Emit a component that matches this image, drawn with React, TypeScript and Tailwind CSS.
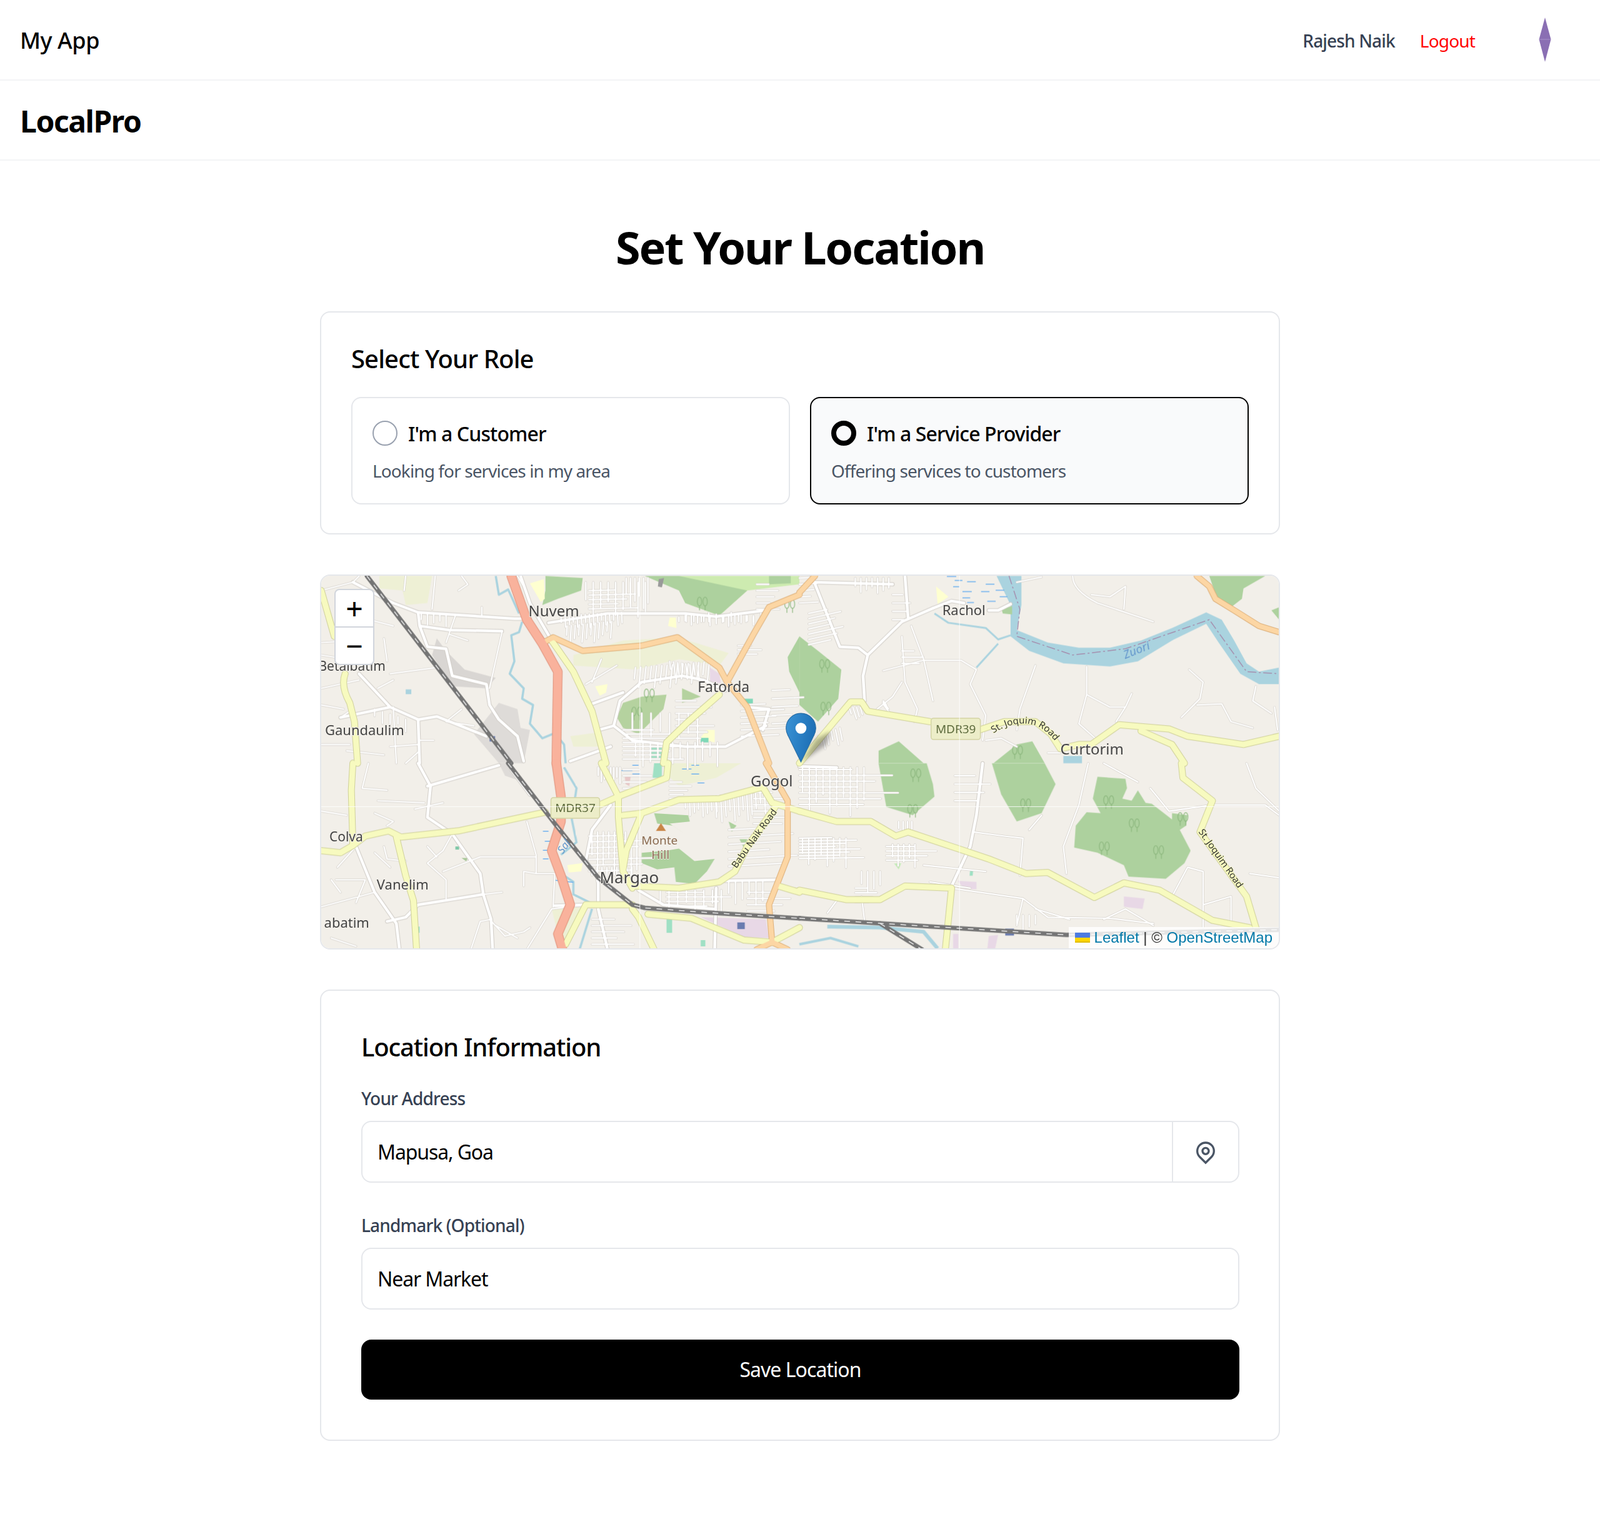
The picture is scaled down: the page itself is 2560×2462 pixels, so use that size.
import { RiMapPinLine } from 'react-icons/ri';

// map art is traced from the four map quadrants, each one in its own crop coordinates
const comb = (x: number, y: number, n: number, dx: number, dy: number, lx: number, ly: number) => {
  let d = '';
  for (let i = 0; i < n; i++) {
    const k = 0.65 + ((i * 37) % 10) / 14;
    d += `M${x + i * dx},${y + i * dy} l${Math.round(lx * k)},${Math.round(ly * k)} `;
  }
  return d;
};

interface Quad {
  tx: number;
  ty: number;
  areas: [string, string][];
  water: [number, string][];
  thin: string[];
  white: string[];
  yellow: string[];
  orange: string[];
  trunk: string[];
  rail: string[];
}

const quads: Quad[] = [
  {
    tx: -14,
    ty: -19,
    areas: [
      ['#eef0d5', 'M840,440 L1000,370 L1175,355 L1340,430 L1310,490 L1180,460 L1040,510 L840,490 Z'],
      ['#eef0d5', 'M830,830 L930,810 L920,880 L840,880 Z'],
      ['#eef0d5', 'M215,60 L385,60 L370,190 L300,200 L290,130 L215,120 Z'],
      ['#d9d6d3', 'M400,360 L430,420 L490,510 L590,550 L560,600 L450,590 L385,440 Z'],
      ['#dedbd8', 'M600,670 L660,700 L670,790 L700,800 L680,960 L600,960 L520,820 Z'],
      ['#cdebb0', 'M1180,60 L1568,60 L1568,100 L1400,130 L1310,250 L1200,190 Z'],
      ['#add19e', 'M1070,60 L1180,60 L1400,130 L1310,250 L1200,190 L1180,130 Z'],
      ['#add19e', 'M1470,60 L1540,60 L1540,95 L1470,100 Z'],
      ['#add19e', 'M750,60 L870,70 L865,130 L790,170 L740,200 L750,130 Z'],
      ['#feffd0', 'M700,95 L745,75 L748,170 L735,185 Z'],
      ['#feffd0', 'M910,590 L950,580 L945,620 L925,635 Z'],
      ['#feffd0', 'M1150,260 L1170,260 L1172,310 L1145,300 Z'],
      ['#feffd0', 'M1270,800 L1295,800 L1295,860 L1245,845 Z'],
      ['#b5d29f', 'M980,740 L1000,670 L1060,640 L1140,630 L1130,700 L1050,820 L1000,790 Z'],
      ['#b5d29f', 'M1190,600 L1250,640 L1190,670 Z'],
      ['#add19e', 'M1530,450 L1568,350 L1568,620 L1535,520 Z'],
      ['#e8d8e6', 'M1280,500 L1310,530 L1315,575 L1280,570 Z'],
      ['#7fd8b8', 'M1390,650 L1418,650 L1418,695 L1390,695 Z'],
      ['#7fd8b8', 'M1250,838 L1275,838 L1275,860 L1250,860 Z'],
      ['#9fe0c4', 'M1090,880 L1125,880 L1125,945 L1090,945 Z'],
      ['#aad3df', 'M300,605 L318,605 L318,628 L300,628 Z'],
      ['#6a7cb0', 'M570,830 L588,830 L588,855 L570,855 Z'],
      ['#9a9a9a', 'M1115,75 L1132,70 L1125,115 L1112,110 Z'],
    ],
    water: [
      [
        3.5,
        'M590,60 L600,150 L630,125 L665,240 M675,280 L665,330 L640,345 L650,470 L635,530 L680,600 L675,650 L710,680 L700,770 L740,840 L780,815 L810,870 L815,960',
      ],
    ],
    thin: [
      'M300,60 L295,130 M395,60 L385,220 M545,210 L545,250 M460,250 L430,380 M610,330 L570,600 M930,460 L900,570 M880,580 L980,490',
      'M150,60 L130,90 L28,130 M28,440 L150,470 M230,360 L240,470 M28,600 L150,560 M90,740 L130,700 M210,600 L260,560 M260,690 L270,960',
      'M340,850 L390,850 M345,900 L300,960 M28,870 L120,870 M250,880 L340,870 M400,500 L250,530 M28,380 L150,370 M28,680 L100,700 M110,900 L230,920',
      'M660,60 L680,110 M480,60 L500,100 L470,130 M130,250 L260,300 M480,700 L430,760 L520,780 M440,340 L500,370',
      comb(880, 90, 9, 24, 0, 0, 130),
      comb(890, 130, 5, 0, 22, 130, -4),
      comb(1010, 70, 6, 14, 0, 0, 120),
      comb(1040, 500, 15, 17, -2, -6, 85),
      comb(1150, 470, 8, 13, 3, 4, 60),
      comb(820, 300, 12, 13, -2, -3, 70),
      comb(800, 250, 16, 13, -1, 2, 50),
      comb(1180, 280, 12, 24, 0, 0, -35),
      comb(1200, 250, 12, 20, 0, 0, 40),
      comb(1380, 680, 6, 0, 30, 120, -8),
      comb(1030, 720, 8, 30, 0, 0, 120),
      comb(1040, 860, 12, 24, 0, 0, 100),
      comb(1000, 800, 8, 0, 20, 150, 0),
      comb(1170, 660, 7, 0, 30, 100, 0),
      comb(1480, 610, 5, 0, 40, 88, -6),
      comb(1430, 100, 5, 0, 30, 60, 0),
      comb(1370, 395, 3, 0, 20, 65, 0),
      comb(200, 700, 5, 25, 12, 0, 50),
      comb(350, 240, 5, 20, 2, 0, 45),
    ],
    white: [
      'M260,190 L340,235 L650,265 L700,265 M760,285 L950,240 L1200,240 L1300,255 L1460,225',
      'M670,60 L700,190 L770,370',
      'M340,235 L345,300 L440,320 L610,325 M345,300 L370,400 L430,410 L450,540 L560,580 L570,680 L600,750 L660,830 L680,950',
      'M130,90 L260,190 M150,530 L250,690 L340,750 L400,735 L560,830 M340,750 L345,960 M250,690 L90,740',
      'M970,780 L990,660 L1060,570 L1190,540 L1260,560 L1330,610 M970,780 L1030,850 L1200,880 L1330,880 L1460,780 M830,950 L960,880',
      'M890,680 L1000,620 M920,800 L970,780 M1400,690 L1470,700 L1450,800',
    ],
    yellow: [
      'M28,130 L70,350 M105,530 Q90,590 120,670 L135,760 L145,960',
      'M770,370 L840,520 L900,710 L945,960',
      'M1310,630 L1210,760 L1140,860 L1130,960',
    ],
    orange: [
      'M750,375 L775,355 L870,420 L1060,395 L1175,355 L1310,500 L1335,570 L1400,690 L1470,960',
      'M1335,570 L1420,340 L1470,210 L1568,150',
    ],
    trunk: ['M640,60 L690,270 L740,385 L790,520 L785,960'],
    rail: ['M175,60 L640,960'],
  },
  {
    tx: -14,
    ty: 301,
    areas: [
      ['#eef0d5', 'M1140,0 L1380,0 L1300,70 L1180,110 L1145,60 Z'],
      ['#eef0d5', 'M770,700 L875,690 L815,850 L790,820 Z'],
      ['#e8d8e6', 'M1250,740 L1460,750 L1470,840 L1390,835 Z'],
      ['#6a7cb0', 'M1368,765 L1392,765 L1392,797 L1368,797 Z'],
      ['#dedbd8', 'M600,0 L630,0 L660,80 L620,60 Z'],
      ['#add19e', 'M1100,240 L1210,250 L1215,280 L1150,290 L1200,340 L1160,300 L1110,290 Z'],
      ['#add19e', 'M1060,430 L1140,420 L1180,410 L1230,470 L1295,460 L1270,520 L1230,580 L1170,570 L1165,500 L1110,510 L1060,480 Z'],
      ['#add19e', 'M1340,280 L1365,300 L1350,330 Z'],
      ['#add19e', 'M1375,365 L1400,365 L1390,410 Z'],
      ['#feffd0', 'M820,490 L870,480 L865,520 L825,525 Z'],
      ['#9fe0c4', 'M1100,0 L1125,0 L1125,70 L1095,70 Z'],
      ['#9fe0c4', 'M1140,745 L1158,745 L1158,815 L1140,815 Z'],
      ['#9fe0c4', 'M1250,850 L1265,850 L1265,880 L1250,880 Z'],
      ['#9fe0c4', 'M335,785 L345,785 L345,815 L335,815 Z'],
      ['#e8c8c8', 'M1005,60 L1025,60 L1020,110 L1008,100 Z'],
      ['#7fc8a8', 'M460,400 L472,400 L472,415 L460,415 Z'],
      ['#a9c89a', 'M480,455 L500,455 L495,472 Z'],
      ['#c98546', 'M1122,288 L1138,325 L1106,325 Z'],
    ],
    water: [
      [3.5, 'M810,20 L850,120 L835,270 L850,380 L800,440 M810,540 L840,570 L840,630 L900,675 M900,700 L860,895'],
      [
        1.5,
        'M995,35 L1030,35 M1030,10 L1050,10 M1030,52 L1055,52 M1190,28 L1220,28 M1220,52 L1245,52 M1240,95 L1262,95 M1220,10 L1245,10 M742,327 L760,327 M748,375 L770,375 M742,418 L765,418 M742,460 L760,460 M778,562 L840,572',
      ],
    ],
    thin: [
      'M180,0 L160,120 L240,130 M210,180 L360,190 M140,400 L80,500 M28,690 L200,620 M200,430 L250,500 M75,560 L170,560 L140,670',
      'M330,220 L420,190 M420,520 L540,450 L720,450 M450,340 L420,420 L370,480 L430,560 L430,650 M340,680 L550,630 L610,620 M570,750 L620,830 L680,810 L700,790',
      'M690,280 L720,440 L720,530 L680,520 L680,590 M720,530 L780,530 L775,690 M510,895 L540,760 L575,750 M690,895 L770,700 L880,680',
      'M28,230 L110,250 M200,240 L260,280 L240,300 M60,840 L140,880 M230,400 L240,460 L300,470 M370,400 L400,450 M590,780 L660,840 M60,560 L90,620',
      comb(900, 330, 9, 18, 0, 0, 170),
      comb(890, 350, 7, 0, 28, 170, -6),
      comb(900, 500, 9, 16, 0, 0, 60),
      comb(1120, 610, 8, 28, 0, 0, 80),
      comb(1140, 620, 4, 0, 22, 180, 0),
      comb(1300, 160, 12, 14, -4, 4, 110),
      comb(1200, 170, 8, 14, 0, 2, 70),
      comb(1340, 320, 6, 0, 35, 180, -15),
      comb(1420, 140, 6, 0, 30, 90, 0),
      comb(1340, 560, 6, 22, 0, 0, 100),
      comb(1400, 620, 4, 0, 30, 120, 0),
      comb(900, 750, 6, 0, 30, 110, 0),
      comb(1150, 90, 5, 0, 20, 60, 0),
      comb(1000, 30, 4, 0, 30, 80, 0),
      comb(920, 20, 8, 10, 0, 0, 60),
    ],
    white: [
      'M340,0 L380,110 L370,260 L450,340 L540,530 L550,630 L575,750 L580,895',
      'M370,110 L600,10 M140,400 L200,620 L270,770 L280,895 M550,630 L340,680 L300,740 L240,760',
      'M880,680 L780,685 M640,30 L700,150 M960,200 L900,320 L880,470 L920,550 L920,700 L950,895',
      'M1050,610 L1130,680 L1290,700 M1300,600 L1295,895 M1320,565 L1500,560',
    ],
    yellow: [
      'M28,420 L90,430 L130,395 L170,350 L245,325 L285,355 L470,325 L750,235',
      'M925,200 L985,160 L1140,70 L1145,0 M930,0 L985,160 M985,160 L985,260 L1000,520 L1030,600 M1060,240 L1010,420 L1000,510',
      'M1000,250 L1060,240 L1180,175 L1310,170 L1450,115 L1480,190 L1568,230',
      'M270,355 L300,540 L325,660 L335,895 M130,0 L125,130 L130,395',
      'M1030,590 L1180,600 L1310,570 L1360,520 L1400,400 L1490,210',
      'M815,870 L880,680 L1030,680 M1030,700 L1050,740 L1100,895 M1080,725 L1220,745 L1390,850 L1480,860 L1568,790 M1500,590 L1568,620',
    ],
    orange: ['M1460,0 L1530,180 L1530,450 L1470,680 L1480,860 M1430,895 L1480,860 L1530,895'],
    trunk: ['M785,0 L800,160 L800,280 L770,420 L800,540 L830,680 L790,820 L805,895'],
    rail: ['M630,0 L780,290 L920,550 L1030,680 L1070,695 L1250,715 L1568,745'],
  },
  {
    tx: 766,
    ty: -19,
    areas: [
      [
        '#aad3df',
        'M635,60 L715,60 L715,200 L700,320 L800,380 L900,405 L1000,405 L1100,370 L1200,310 L1310,235 L1360,270 L1400,370 L1440,480 L1480,520 L1545,500 L1545,580 L1480,580 L1420,530 L1350,380 L1310,290 L1200,370 L1090,470 L1000,495 L850,480 L740,420 L680,350 L680,200 Z',
      ],
      ['#add19e', 'M1320,60 L1500,60 L1430,120 L1425,170 L1390,210 L1345,170 Z'],
      ['#add19e', 'M1520,225 L1545,210 L1545,270 Z'],
      ['#add19e', 'M0,350 L60,420 L135,510 L125,650 L60,760 L0,680 Z'],
      ['#add19e', 'M255,900 L320,855 L400,960 L255,960 Z'],
      ['#add19e', 'M625,960 L700,870 L750,855 L790,960 Z'],
      ['#add19e', 'M650,215 L685,205 L685,245 L655,240 Z'],
      ['#feffd0', 'M440,110 L480,160 L445,195 Z'],
      ['#aad3df', 'M850,925 L910,925 L910,960 L850,960 Z'],
    ],
    water: [
      [3, 'M435,240 L480,285 L600,310 L640,365 L680,345 M640,385 L570,500'],
      [
        1.5,
        'M475,62 L505,62 M500,82 L525,82 M525,135 L555,135 M585,135 L612,135 M600,100 L628,100 M632,128 L660,128 M645,160 L670,160 M525,165 L550,165 M605,182 L632,182 M540,188 L562,188 M495,112 L515,112 M540,88 L568,88',
      ],
    ],
    thin: [
      'M880,60 Q880,130 960,190 L1140,280 M940,150 L1000,160 L1050,110 M1050,110 L1045,220 M700,90 L780,65',
      'M925,495 L925,630 L1000,690 L1050,690 M1070,625 L1050,690 L1020,760 M925,630 L900,770 L960,850 M760,490 L710,700 L700,800',
      'M1255,510 L1300,570 L1290,650 L1230,740 M1280,680 L1360,675 L1390,760 L1460,790 M1470,590 L1460,660 L1520,720 M1530,690 L1540,800',
      'M270,515 L400,465 L520,465 L570,510 L550,580 L600,730 L590,850 M360,300 L400,460 L430,660 M330,570 L300,640 L250,700 M330,350 L340,570 L380,700 L370,760',
      'M600,850 L650,840 L700,880 M800,910 L840,910',
      comb(30, 240, 7, 0, 25, 90, -30),
      comb(270, 660, 5, 0, 4, 15, 30),
      comb(180, 70, 7, 18, 0, 0, 60),
      comb(300, 150, 4, 0, 40, 50, 0),
      comb(160, 690, 4, 12, 0, 10, 50),
      comb(60, 830, 6, 14, -8, 8, 60),
      comb(0, 70, 5, 0, 30, 50, -4),
      comb(330, 420, 3, 0, 30, 60, 0),
    ],
    white: [
      'M430,215 L330,280 L220,440 L205,540 L210,660',
      'M430,215 L490,180 L530,190 M610,225 L640,225 L680,195',
      'M40,60 L130,400 L190,405 L220,440 M340,60 L350,260 M50,90 L300,100',
    ],
    yellow: [
      'M0,960 L95,790 L165,665 L200,665 L220,710 L420,760',
      'M580,800 L660,760 L760,760 L810,820 L840,890 L900,870 L940,870 L1030,775 L1190,795 L1250,830 L1430,870 L1545,830',
      'M1100,805 L1200,870 L1240,960',
    ],
    orange: ['M1280,60 L1320,110 L1340,170 L1400,225 L1480,300 L1545,330', 'M0,140 L50,60'],
    trunk: [],
    rail: [],
  },
  {
    tx: 766,
    ty: 301,
    areas: [
      ['#add19e', 'M255,0 L410,0 L430,100 L435,160 L365,250 L280,210 Z'],
      ['#add19e', 'M620,0 L790,0 L825,100 L780,240 L700,280 L650,150 Z'],
      [
        '#add19e',
        'M960,65 L1050,75 L1055,120 L1040,170 L1070,180 L1090,130 L1115,190 L1135,195 L1200,270 L1200,240 L1250,250 L1245,300 L1225,320 L1260,420 L1240,480 L1180,555 L1060,545 L1045,490 L960,430 L885,405 L890,300 L925,235 L970,240 L945,170 Z',
      ],
      ['#e8d8e6', 'M510,565 L570,570 L570,605 L530,605 Z'],
      ['#e8d8e6', 'M1045,640 L1112,650 L1105,700 L1045,690 Z'],
      ['#e8d8e6', 'M610,830 L640,825 L630,895 L605,895 Z'],
      ['#e8d8e6', 'M495,820 L512,820 L512,895 L495,895 Z'],
      ['#9fe0c4', 'M550,512 L560,512 L558,540 L548,540 Z'],
      ['#c4ecb8', 'M305,482 L328,480 L320,510 Z'],
      ['#6a7cb0', 'M663,795 L691,795 L691,828 L663,828 Z'],
    ],
    water: [
      [6, 'M90,785 L260,790 L400,810 L445,890'],
      [4, 'M0,870 L100,840 L190,880'],
    ],
    thin: [
      'M560,330 L660,350 L720,360 L710,540 M490,600 L720,650 L800,740 L1000,745 L1140,770 M720,650 L700,780',
      'M740,320 L780,250 M860,530 L850,400 L900,200 L930,0 M980,0 L1090,90 M1130,120 L1190,230 L1330,200 L1500,200 L1545,250',
      'M1200,640 L1250,500 L1300,520 L1300,790 M1300,680 L1390,640 L1390,770 M1450,530 L1545,550 M1440,0 L1470,120 L1545,230',
      'M90,720 L130,640 M200,640 L210,760 M980,750 L1050,700 L1140,780 M760,700 L870,750 M400,490 L600,520 M420,570 L550,600',
      comb(10, 20, 10, 22, 0, 0, 180),
      comb(0, 30, 7, 0, 28, 260, 0),
      comb(0, 360, 8, 0, 14, 160, -4),
      comb(10, 360, 8, 20, 0, 0, 110),
      comb(300, 390, 5, 18, 0, 0, 90),
      comb(280, 400, 4, 0, 22, 140, 0),
      comb(320, 280, 4, 14, 0, 0, 50),
      comb(200, 520, 4, 20, 0, 0, 90),
      comb(700, 730, 4, 20, 0, 0, 60),
      comb(500, 60, 4, 0, 40, 100, 0),
      comb(180, 600, 4, 0, 22, 60, 0),
    ],
    white: ['M590,0 L570,250 L550,400 L490,590', 'M0,15 L120,20'],
    yellow: [
      'M0,230 L120,280 L230,280 L310,350 L350,330 L610,460 L730,530 L800,525 L950,645 L1045,575 L1160,610 L1330,755 L1450,790',
      'M0,610 L150,655 L260,655 L340,590 L490,600 L470,895',
      'M1230,0 L1235,70 L1330,180 L1290,330 L1440,640 L1470,790',
    ],
    orange: [],
    trunk: [],
    rail: ['M0,745 L860,825 L1545,800', 'M260,770 L395,895'],
  },
];

// forest symbols, in map pixels
const trees: [number, number][] = [
  [952, 321],
  [1128, 369],
  [1261, 364],
  [1302, 401],
  [1380, 391],
  [1254, 438],
  [1341, 444],
  [947, 378],
  [806, 146],
  [808, 214],
  [1115, 284],
  [610, 46],
  [750, 50],
  [525, 193],
  [505, 222],
];

const TreeMark = ({ x, y }: { x: number; y: number }) => (
  <g fill="none" stroke="#8db87f" strokeWidth={1.2}>
    <ellipse cx={x - 4} cy={y - 4} rx={3.5} ry={7} />
    <ellipse cx={x + 5} cy={y - 4} rx={3.5} ry={7} />
    <path d={`M${x - 4},${y + 2} V${y + 10} M${x + 5},${y + 2} V${y + 10}`} />
  </g>
);

const StrokeLayer = ({ pick, color, width, dash }: { pick: (q: Quad) => string[]; color: string; width: number; dash?: string }) => (
  <>
    {quads.map((q, i) => (
      <g key={i} transform={`translate(${q.tx},${q.ty}) scale(0.4975,0.3333)`}>
        {pick(q).map((d, j) => (
          <path
            key={j}
            d={d}
            fill="none"
            stroke={color}
            strokeWidth={width}
            strokeDasharray={dash}
            strokeLinejoin="round"
            strokeLinecap={dash ? 'butt' : 'round'}
            vectorEffect="non-scaling-stroke"
          />
        ))}
      </g>
    ))}
  </>
);

const labelClass = "font-['Noto_Sans',sans-serif]";

const MapLabel = ({ x, y, size, text, anchor }: { x: number; y: number; size: number; text: string; anchor?: 'end' }) => (
  <text
    x={x}
    y={y}
    fontSize={size}
    fill="#444444"
    textAnchor={anchor}
    stroke="#f2efe9"
    strokeWidth={2}
    paintOrder="stroke"
    className={labelClass}
  >
    {text}
  </text>
);

const Shield = ({ x, y, w, h, text }: { x: number; y: number; w: number; h: number; text: string }) => (
  <g>
    <rect x={x} y={y} width={w} height={h} rx={4} fill="#ecedc8" stroke="#d3d4a4" strokeWidth={1.5} />
    <text x={x + w / 2} y={y + h / 2 + 7} fontSize={19} fill="#5d6b3c" textAnchor="middle" className={labelClass}>
      {text}
    </text>
  </g>
);

function MapArt() {
  return (
    <svg viewBox="0 1 1534 600" className="block h-[600px] w-full">
      <defs>
        <filter id="soft" x="0" y="0" width="100%" height="100%">
          <feGaussianBlur stdDeviation="0.6" />
        </filter>
        <filter id="shadow">
          <feGaussianBlur stdDeviation="3" />
        </filter>
        <linearGradient id="pin" x1="0" y1="0" x2="1" y2="0.3">
          <stop offset="0" stopColor="#3a93d6" />
          <stop offset="1" stopColor="#1d6fb5" />
        </linearGradient>
        <path id="joquim1" d="M1077,253 Q1115,228 1150,243 Q1170,254 1184,278" />
        <path id="joquim2" d="M1405,411 L1477,513" />
        <path id="babu" d="M665,470 Q700,420 736,372" />
      </defs>
      <rect y="0" width="1534" height="602" fill="#f2efe9" />
      <g filter="url(#soft)">
        {quads.map((q, i) => (
          <g key={i} transform={`translate(${q.tx},${q.ty}) scale(0.4975,0.3333)`}>
            {q.areas.map(([fill, d], j) => (
              <path key={j} d={d} fill={fill} />
            ))}
            {q.water.map(([w, d], j) => (
              <path
                key={j}
                d={d}
                fill="none"
                stroke={w < 2 ? '#6fb1ef' : '#aad3df'}
                strokeWidth={w}
                strokeLinejoin="round"
                vectorEffect="non-scaling-stroke"
              />
            ))}
          </g>
        ))}
        {trees.map(([x, y], i) => (
          <TreeMark key={i} x={x} y={y} />
        ))}
        <g transform="translate(766,-19) scale(0.4975,0.3333)">
          <path
            d="M675,60 L710,220 L700,350 L880,440 L1050,410 L1320,270 L1440,520 L1545,530"
            fill="none"
            stroke="#a58fae"
            strokeWidth={1.5}
            strokeDasharray="14 4 3 4"
            vectorEffect="non-scaling-stroke"
          />
        </g>
        <StrokeLayer pick={(q) => q.thin} color="#d6d2cc" width={3.6} />
        <StrokeLayer pick={(q) => q.white} color="#d0ccc6" width={6.5} />
        <StrokeLayer pick={(q) => q.thin} color="#ffffff" width={2.2} />
        <StrokeLayer pick={(q) => q.white} color="#ffffff" width={4.5} />
        <StrokeLayer pick={(q) => q.yellow} color="#cfd09a" width={11} />
        <StrokeLayer pick={(q) => q.orange} color="#dcae78" width={10} />
        <StrokeLayer pick={(q) => q.trunk} color="#df8f78" width={15} />
        <StrokeLayer pick={(q) => q.yellow} color="#f7fabf" width={9} />
        <StrokeLayer pick={(q) => q.orange} color="#fcd6a4" width={8} />
        <StrokeLayer pick={(q) => q.trunk} color="#f9b29c" width={13} />
        <StrokeLayer pick={(q) => q.rail} color="#757575" width={7} />
        <StrokeLayer pick={(q) => q.rail} color="#e8e8e8" width={1.5} dash="9 9" />

        <MapLabel x={332} y={66} size={24} text="Nuvem" />
        <MapLabel x={603} y={187} size={23} text="Fatorda" />
        <MapLabel x={103} y={153} size={21} text="Betalbatim" anchor="end" />
        <MapLabel x={6} y={256} size={22} text="Gaundaulim" />
        <MapLabel x={13} y={426} size={21} text="Colva" />
        <MapLabel x={89} y={503} size={22} text="Vanelim" />
        <MapLabel x={77} y={564} size={22} text="abatim" anchor="end" />
        <MapLabel x={446} y={493} size={26} text="Margao" />
        <MapLabel x={688} y={338} size={24} text="Gogol" />
        <MapLabel x={995} y={64} size={22} text="Rachol" />
        <MapLabel x={1184} y={287} size={24} text="Curtorim" />
        <text x={513} y={431} fontSize={19} fill="#8a6a50" stroke="#f2efe9" strokeWidth={1.5} paintOrder="stroke" className={labelClass}>
          Monte
        </text>
        <text x={529} y={454} fontSize={19} fill="#8a6a50" stroke="#f2efe9" strokeWidth={1.5} paintOrder="stroke" className={labelClass}>
          Hill
        </text>
        <text
          x={0}
          y={0}
          transform="translate(1288,134) rotate(-22)"
          fontSize={19}
          fontStyle="italic"
          fill="#6699cd"
          className={labelClass}
        >
          Zuori
        </text>
        <text
          x={0}
          y={0}
          transform="translate(387,447) rotate(-55)"
          fontSize={17}
          fontStyle="italic"
          fill="#6699cd"
          className={labelClass}
        >
          Sal
        </text>
        <text fontSize={15} fill="#333333" stroke="#f7fabf" strokeWidth={1.5} paintOrder="stroke" className={labelClass}>
          <textPath href="#joquim1">St. Joquim Road</textPath>
        </text>
        <text fontSize={15} fill="#333333" stroke="#f7fabf" strokeWidth={1.5} paintOrder="stroke" className={labelClass}>
          <textPath href="#joquim2">St. Joquim Road</textPath>
        </text>
        <text fontSize={15} fill="#333333" stroke="#f7fabf" strokeWidth={1.5} paintOrder="stroke" className={labelClass}>
          <textPath href="#babu">Babu Naik Road</textPath>
        </text>
        <Shield x={368} y={356} w={78} h={33} text="MDR37" />
        <Shield x={977} y={229} w={79} h={34} text="MDR39" />
      </g>

      {/* tile seams */}
      <path d="M510.5,0 V602 M1022.5,0 V602 M0,370.5 H1534" stroke="#ffffff" strokeWidth={1} opacity={0.85} />

      <path d="M768,300 L793,262 L816,250 L809,272 Z" fill="#000000" opacity={0.3} filter="url(#shadow)" />
      <g transform="translate(743.5,220) scale(2)">
        <path
          d="M12.5,0.5 C5.9,0.5 0.6,5.9 0.6,12.5 C0.6,14.9 1.4,17 2.5,19 L12.5,39.5 L22.5,19 C23.6,17 24.4,14.9 24.4,12.5 C24.4,5.9 19.1,0.5 12.5,0.5 Z"
          fill="url(#pin)"
          stroke="#2a6ea6"
          strokeWidth={0.6}
        />
        <circle cx="12.5" cy="12.5" r="4.4" fill="#ffffff" />
      </g>
    </svg>
  );
}

function RoleCard({ title, note, selected }: { title: string; note: string; selected?: boolean }) {
  return (
    <div className={selected ? 'rounded-2xl border-2 border-black bg-gray-50 p-8' : 'rounded-2xl border-2 border-gray-200 bg-white p-8'}>
      <div className="mb-4 flex items-center gap-[17px]">
        <span className={selected ? 'size-10 rounded-full border-[8px] border-black' : 'size-10 rounded-full border-2 border-gray-400'} />
        <span className="pt-[2px] text-[32px] leading-[46px] font-medium tracking-[-0.028em] text-black">{title}</span>
      </div>
      <p className="text-[28px] leading-10 tracking-[-0.032em] text-gray-600">{note}</p>
    </div>
  );
}

export default function App() {
  return (
    <div className="min-h-[2462px] bg-white font-['Noto_Sans','Open_Sans',sans-serif]">
      <header className="flex h-[129px] items-center justify-between border-b-2 border-gray-100 pr-[78px] pl-8">
        <span className="pt-[2px] text-[36px] font-medium tracking-[-0.012em] text-black">My App</span>
        <div className="flex items-center">
          <span className="pt-[2px] text-[28px] font-medium tracking-[-0.03em] text-gray-700">Rajesh Naik</span>
          <span className="ml-10 pt-[2px] text-[28px] tracking-[-0.03em] text-[#ff0000]">Logout</span>
          <svg width="20" height="71" viewBox="0 0 20 71" className="ml-[102px]">
            <path d="M10,0 L19.5,35 L10,71 L0.5,35 Z" fill="#8a6fb3" />
            <path d="M1,35 H19" stroke="#a893cb" strokeWidth={1} />
          </svg>
        </div>
      </header>
      <div className="flex h-[128px] items-center border-b-2 border-gray-100 pt-[4px] pl-8">
        <h2 className="text-[48px] font-bold tracking-[-0.03em] text-black">LocalPro</h2>
      </div>

      <main className="mx-auto max-w-[1536px] pt-[98px]">
        <h1 className="mb-[63px] text-center text-[72px] leading-20 font-bold tracking-[-0.03em] text-black">Set Your Location</h1>

        <section className="rounded-2xl border-2 border-gray-200 bg-white px-12 pt-[46px] pb-[46px]">
          <h3 className="mb-[33px] text-[40px] leading-14 font-medium tracking-[-0.022em] text-black">Select Your Role</h3>
          <div className="grid grid-cols-2 gap-8">
            <RoleCard title="I'm a Customer" note="Looking for services in my area" />
            <RoleCard title="I'm a Service Provider" note="Offering services to customers" selected />
          </div>
        </section>

        <div className="relative mt-16 h-[600px] overflow-hidden rounded-2xl border-2 border-gray-200">
          <MapArt />
          <div className="absolute top-[21px] left-[21px] flex w-[64px] flex-col rounded-[8px] border-2 border-gray-300 bg-white text-black">
            <span className="flex h-[60px] items-center justify-center border-b-2 border-gray-300 font-['DejaVu_Sans_Mono',monospace] text-[44px]">+</span>
            <span className="flex h-[58px] items-center justify-center font-['DejaVu_Sans_Mono',monospace] text-[44px]">−</span>
          </div>
          <div className="absolute right-0 bottom-0 flex h-[34px] items-center gap-[7px] bg-white/80 pr-[10px] pl-[10px] font-['Liberation_Sans',sans-serif] text-[24px] text-[#333333]">
            <svg width="24" height="16" viewBox="0 0 12 8">
              <path fill="#4C7BE1" d="M0 0h12v4H0z" />
              <path fill="#FFD500" d="M0 4h12v3H0z" />
              <path fill="#E0BC00" d="M0 7h12v1H0z" />
            </svg>
            <span>
              <span className="text-[#0078a8]">Leaflet</span> | © <span className="text-[#0078a8]">OpenStreetMap</span>
            </span>
          </div>
        </div>

        <section className="mt-16 rounded-2xl border-2 border-gray-200 bg-white pt-[62px] pr-[63px] pb-16 pl-16">
          <h3 className="mb-[34px] text-[40px] leading-14 font-medium tracking-[-0.028em] text-black">Location Information</h3>
          <label className="mb-4 block text-[28px] leading-10 font-medium tracking-[-0.03em] text-gray-700">Your Address</label>
          <div className="mb-[48px] flex h-[99px] items-stretch rounded-2xl border-2 border-gray-200">
            <div className="flex flex-1 items-center px-6 text-[32px] tracking-[-0.035em] text-black">Mapusa, Goa</div>
            <div className="flex w-[106px] items-center justify-center border-l-2 border-gray-200 text-gray-600">
              <RiMapPinLine size={40} />
            </div>
          </div>
          <label className="mb-4 block text-[28px] leading-10 font-medium tracking-[-0.03em] text-gray-700">Landmark (Optional)</label>
          <div className="mb-[48px] flex h-[99px] items-center rounded-2xl border-2 border-gray-200 px-6 text-[32px] tracking-[-0.035em] text-black">
            Near Market
          </div>
          <button type="button" className="h-[96px] w-full rounded-2xl bg-black text-[32px] tracking-[-0.03em] text-white">
            Save Location
          </button>
        </section>
      </main>
    </div>
  );
}
